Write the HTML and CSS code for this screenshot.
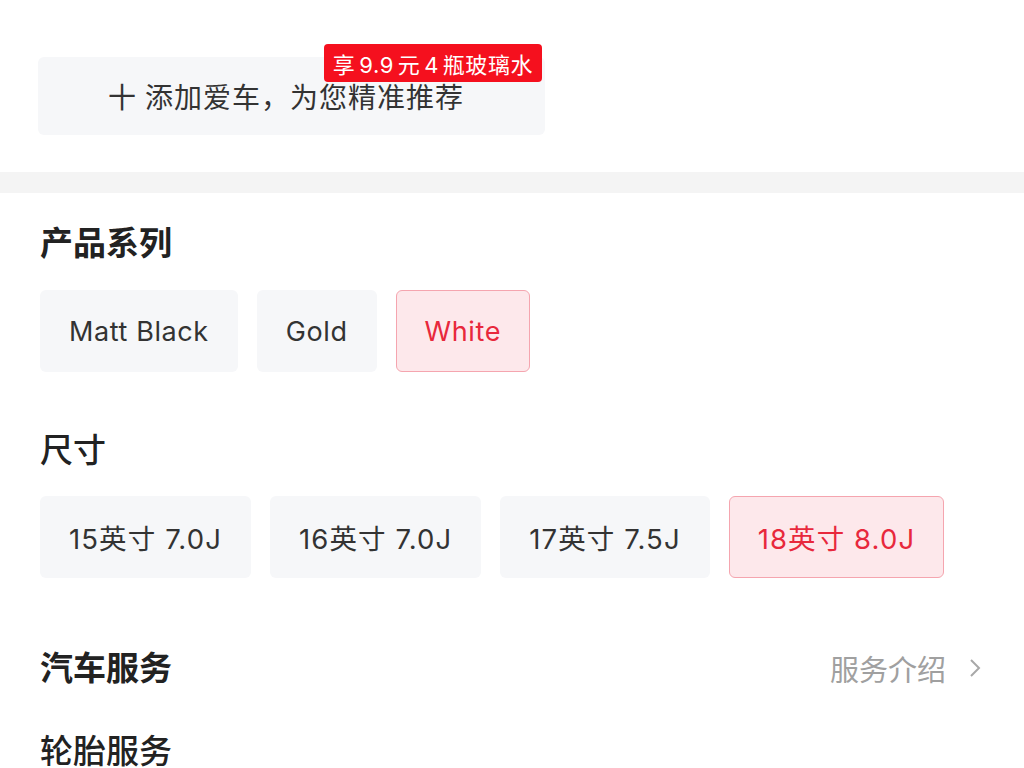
FILE: index.html
```html
<!DOCTYPE html>
<html lang="zh-CN">
<head>
<meta charset="utf-8">
<title>产品选择</title>
<link rel="stylesheet" href="styles.css">
</head>
<body>
<div class="top">
  <div class="add-car">
    <span class="plus">十</span><span class="add-text">添加爱车，为您精准推荐</span>
    <span class="badge">享 9.9 元 4 瓶玻璃水</span>
  </div>
</div>
<div class="sep"></div>
<div class="content">
  <h2 class="heading bold">产品系列</h2>
  <div class="chips">
    <div class="chip">Matt Black</div>
    <div class="chip">Gold</div>
    <div class="chip active">White</div>
  </div>
  <h2 class="heading h-size">尺寸</h2>
  <div class="chips">
    <div class="chip">15英寸 7.0J</div>
    <div class="chip">16英寸 7.0J</div>
    <div class="chip">17英寸 7.5J</div>
    <div class="chip active">18英寸 8.0J</div>
  </div>
  <div class="row-head">
    <h2 class="heading bold">汽车服务</h2>
    <div class="more">服务介绍<svg class="chev" width="14" height="20" viewBox="0 0 14 20"><path d="M3 2 L11 10 L3 18" fill="none" stroke="#a8a8a8" stroke-width="2"/></svg></div>
  </div>
  <h2 class="heading h-tire">轮胎服务</h2>
</div>
</body>
</html>
```
FILE: styles.css
```css
* { box-sizing: border-box; }
body {
  margin: 0;
  background: #fff;
  font-family: "Inter", "Noto Sans CJK SC", sans-serif;
  color: #333;
  overflow: hidden;
}
.top {
  padding: 57px 0 37px 38px;
}
.add-car {
  position: relative;
  width: 507px;
  height: 78px;
  background: #f6f7f9;
  border-radius: 6px;
  display: flex;
  align-items: center;
  padding-left: 70px;
  font-size: 28px;
  letter-spacing: 1px;
  color: #333;
}
.plus { margin-right: 8px; }
.badge {
  position: absolute;
  left: 286px;
  top: -13px;
  width: 218px;
  height: 38px;
  background: #f5101e;
  color: #fff;
  font-size: 22px;
  letter-spacing: 0.6px;
  word-spacing: -3px;
  border-radius: 4px;
  display: flex;
  align-items: center;
  justify-content: center;
}
.sep {
  height: 21px;
  background: #f4f4f4;
}
.content {
  padding: 28px 40px 0 40px;
}
.heading {
  margin: 0;
  font-size: 33px;
  line-height: 40px;
  font-weight: 500;
  color: #222;
}
.heading.bold { font-weight: 700; }
.content > .heading:first-child { margin-top: 2px; margin-bottom: 2px; }
.chips {
  display: flex;
  gap: 19px;
  margin-top: 27px;
}
.chip {
  height: 82px;
  padding: 0 28px;
  display: flex;
  align-items: center;
  background: #f6f7f9;
  border-radius: 6px;
  font-size: 27px;
  letter-spacing: 0.6px;
  color: #333;
  border: 1.5px solid transparent;
}
.chip.active {
  background: #fde8eb;
  border-color: #f5a5af;
  color: #e8283c;
}
.h-size { margin-top: 58px; }
.h-size + .chips { margin-top: 26px; }
.h-size + .chips .chip { font-size: 27.5px; letter-spacing: 1.1px; }
.row-head {
  margin-top: 68px;
  display: flex;
  align-items: center;
  justify-content: space-between;
}
.row-head .heading { line-height: 44px; }
.more {
  display: flex;
  align-items: center;
  font-size: 29px;
  color: #a0a0a0;
  margin-right: 2px;
}
.chev { margin-left: 22px; }
.h-tire { margin-top: 44px; line-height: 34px; }
```
